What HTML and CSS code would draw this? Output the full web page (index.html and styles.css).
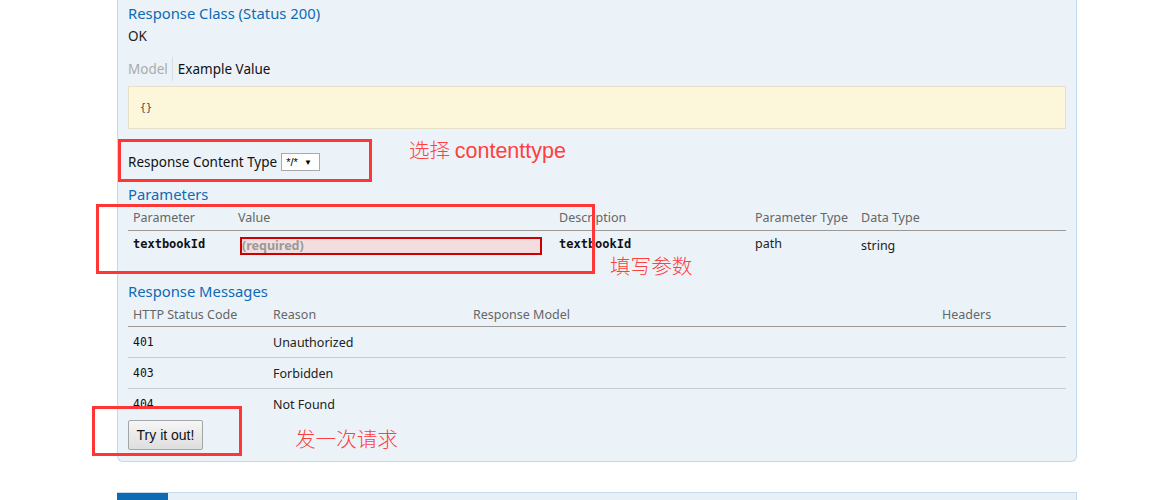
FILE: index.html
```html
<!DOCTYPE html>
<html>
<head>
<meta charset="utf-8">
<link rel="stylesheet" href="styles.css">
</head>
<body>
<div class="page">
  <div class="panel">
    <h4 class="sect first">Response Class (Status 200)</h4>
    <div class="ok">OK</div>
    <div class="tabs">
      <span class="tab off">Model</span>
      <span class="tab on">Example Value</span>
    </div>
    <div class="snippet"><code>{}</code></div>
    <div class="ctype">
      <span>Response Content Type</span>
      <span class="select">*/* <span class="arrow">▼</span></span>
    </div>
    <h4 class="sect params">Parameters</h4>
    <table class="tbl ptbl">
      <colgroup><col style="width:105px"><col style="width:321px"><col style="width:196px"><col style="width:106px"><col></colgroup>
      <thead>
        <tr><th>Parameter</th><th>Value</th><th>Description</th><th>Parameter Type</th><th>Data Type</th></tr>
      </thead>
      <tbody>
        <tr>
          <td class="code">textbookId</td>
          <td class="valcell"><div class="input">(required)</div></td>
          <td class="code">textbookId</td>
          <td>path</td>
          <td class="dtype">string</td>
        </tr>
      </tbody>
    </table>
    <h4 class="sect resp">Response Messages</h4>
    <table class="tbl rtbl">
      <colgroup><col style="width:140px"><col style="width:200px"><col style="width:469px"><col></colgroup>
      <thead>
        <tr><th>HTTP Status Code</th><th>Reason</th><th>Response Model</th><th>Headers</th></tr>
      </thead>
      <tbody>
        <tr><td class="mono">401</td><td>Unauthorized</td><td></td><td></td></tr>
        <tr><td class="mono">403</td><td>Forbidden</td><td></td><td></td></tr>
        <tr class="last"><td class="mono">404</td><td>Not Found</td><td></td><td></td></tr>
      </tbody>
    </table>
    <button class="try">Try it out!</button>
  </div>
  <div class="next">
    <span class="verb"></span>
    <span class="path">/textbooks</span>
  </div>
</div>

<div class="mark m1"></div>
<div class="mark m2"></div>
<div class="mark m3"></div>
<div class="note n1">选择 <span class="latin">contenttype</span></div>
<div class="note n2">填写参数</div>
<div class="note n3">发一次请求</div>
</body>
</html>
```

FILE: styles.css
```css
html, body {
  margin: 0;
  padding: 0;
  background: #ffffff;
}
body {
  position: relative;
  width: 1153px;
  height: 500px;
  overflow: hidden;
  font-family: "Noto Sans", "Open Sans", sans-serif;
  color: #222;
}
.page {
  margin-left: 117px;
  width: 960px;
}
.panel {
  box-sizing: border-box;
  background: #ebf3f9;
  border: 1px solid #c3d9ec;
  border-top: none;
  border-radius: 0 0 6px 6px;
  padding: 3px 10px 11px 10px;
}
.sect {
  margin: 0;
  font-weight: normal;
  font-size: 14.8px;
  line-height: 20px;
  color: #0f6ab4;
}
.ok {
  margin-top: 4px;
  font-size: 13.5px;
  line-height: 18px;
  color: #222;
}
.tabs {
  margin-top: 12px;
  display: flex;
  height: 24px;
  align-items: center;
  font-size: 13.5px;
}
.tab.off {
  color: #aaa;
  padding-right: 4px;
  height: 24px;
  line-height: 24px;
  border-right: 1px solid #ddd;
}
.tab.on {
  color: #111;
  padding-left: 5px;
}
.snippet {
  margin-top: 5px;
  box-sizing: border-box;
  height: 43px;
  background: #fcf6db;
  border: 1px solid #e5e0c6;
  padding: 0 11px;
  display: flex;
  align-items: center;
}
.snippet code {
  font-family: "DejaVu Sans Mono", monospace;
  font-size: 10px;
  color: #444;
}
.ctype {
  margin-top: 24px;
  height: 18px;
  display: flex;
  align-items: center;
  font-size: 13.5px;
  color: #111;
}
.select {
  box-sizing: border-box;
  margin-left: 4px;
  height: 18px;
  width: 39px;
  background: #fff;
  border: 1px solid #aaa;
  font-family: "Liberation Sans", Arial, sans-serif;
  font-size: 11px;
  line-height: 16px;
  padding-left: 4px;
  color: #000;
}
.select .arrow {
  font-size: 8px;
  margin-left: 3px;
  vertical-align: 1px;
}
.params {
  margin-top: 13px;
}
.tbl {
  width: 100%;
  border-collapse: collapse;
  table-layout: fixed;
  font-size: 12.5px;
}
.tbl th {
  text-align: left;
  font-weight: normal;
  color: #666;
  height: 25px;
  padding: 1px 5px 0 5px;
  border-bottom: 1px solid #999;
  vertical-align: middle;
}
.tbl td {
  padding: 0 5px;
  color: #222;
  font-size: 12.5px;
}
.ptbl td {
  height: 28px;
  vertical-align: top;
  padding-top: 4px;
}
.ptbl td.code,
.ptbl td.valcell {
  padding-top: 6px;
}
.ptbl td.dtype {
  padding-top: 6px;
}
.code {
  font-family: "DejaVu Sans Mono", monospace;
  font-weight: bold;
  font-size: 12px !important;
  color: #111 !important;
}
.input {
  box-sizing: border-box;
  margin-left: 2px;
  margin-top: 0;
  width: 302px;
  height: 18px;
  background: #f2dede;
  border: 2px solid #c00;
  color: #999;
  font-weight: bold;
  font-size: 12.5px;
  line-height: 14px;
  padding-left: 0;
}
.resp {
  margin-top: 16px;
}
.rtbl th {
  height: 24px;
}
.rtbl td {
  height: 30px;
  border-bottom: 1px solid #ccc;
  vertical-align: middle;
}
.rtbl tr.last td {
  border-bottom: none;
  height: 30px;
}
.mono {
  font-family: "DejaVu Sans Mono", monospace;
  font-size: 11.5px !important;
  color: #111 !important;
}
.try {
  display: block;
  margin-top: 1px;
  box-sizing: border-box;
  width: 75px;
  height: 30px;
  border: 1px solid #a5a5a5;
  border-radius: 2px;
  background: linear-gradient(#f6f6f6, #dedede);
  font-family: "Liberation Sans", Arial, sans-serif;
  font-size: 14px;
  color: #111;
  padding: 0;
}
.next {
  margin-top: 30px;
  height: 30px;
  display: flex;
  background: #e7f0f7;
  border: 1px solid #c3d9ec;
  border-left: none;
}
.verb {
  width: 51px;
  background: #0f6ab4;
}
.path {
  margin-left: 33px;
  margin-top: 3px;
  font-size: 13px;
  color: #000;
}

/* annotations */
.mark {
  position: absolute;
  box-sizing: border-box;
  border: 3px solid #ff3636;
}
.m1 { left: 118px; top: 139px; width: 254px; height: 43px; }
.m2 { left: 96px; top: 204px; width: 499px; height: 70px; }
.m3 { left: 92px; top: 406px; width: 150px; height: 50px; }
.note {
  position: absolute;
  color: #ff4040;
  font-family: "Noto Sans CJK SC", sans-serif;
  font-weight: 300;
  font-size: 20.6px;
  line-height: 24px;
  white-space: nowrap;
}
.note .latin {
  font-family: "Liberation Sans", Arial, sans-serif;
  font-size: 21.5px;
  font-weight: normal;
}
.n1 { left: 409px; top: 137px; }
.n2 { left: 610px; top: 253px; }
.n3 { left: 295px; top: 426px; }
```
